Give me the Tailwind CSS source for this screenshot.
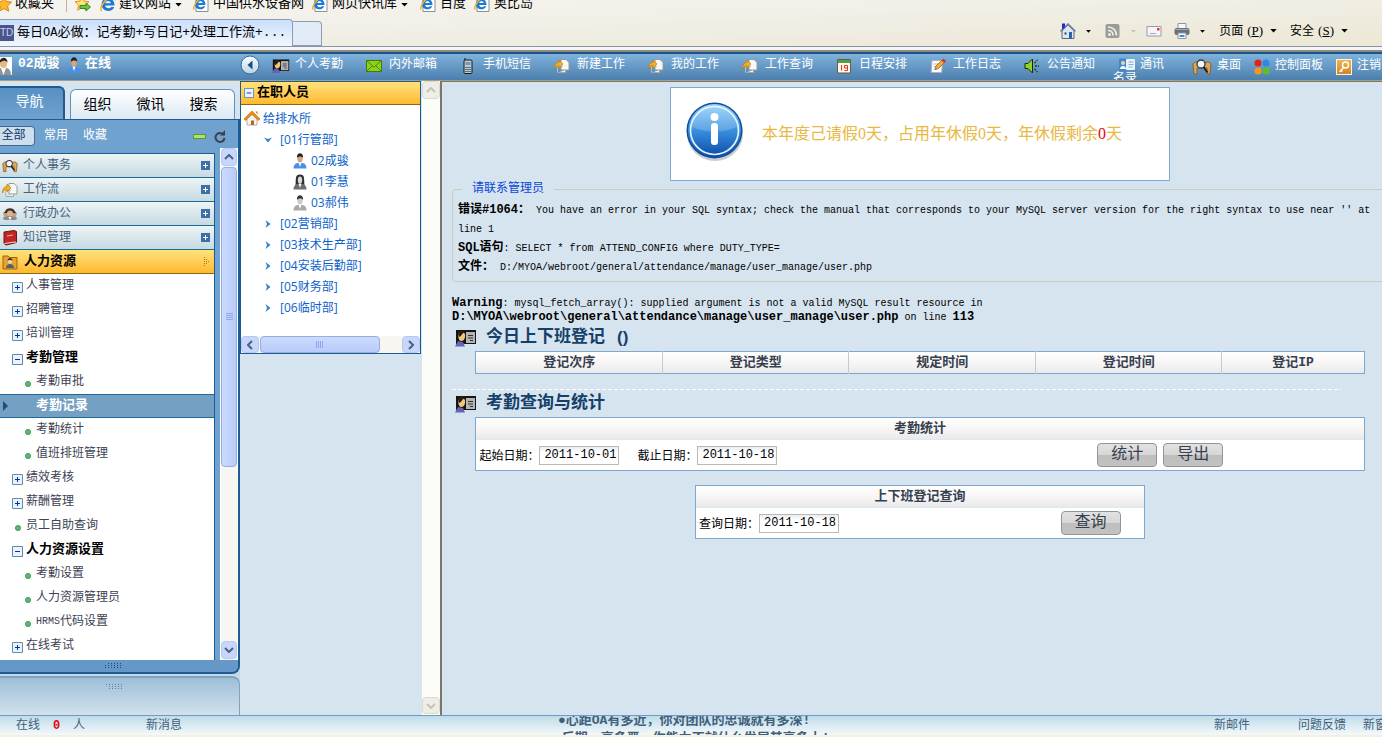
<!DOCTYPE html>
<html lang="zh-CN">
<head>
<meta charset="utf-8">
<title>每日OA必做</title>
<script src="https://cdn.jsdelivr.net/npm/@tailwindcss/browser@4"></script>
</head>
<body class="h-screen overflow-hidden flex flex-col bg-[#d6e4ef] text-black text-[12px] leading-[16px] font-['Liberation_Mono','Noto_Sans_CJK_SC',monospace] whitespace-nowrap">

<svg class="absolute size-0" aria-hidden="true">
  <defs>
    <linearGradient id="gInfo" x1="0" y1="0" x2="0" y2="1"><stop offset="0" stop-color="#8fd0fa"/><stop offset=".5" stop-color="#3a8fdf"/><stop offset="1" stop-color="#0a4aa8"/></linearGradient>
    <linearGradient id="gBack" x1="0" y1="0" x2="0" y2="1"><stop offset="0" stop-color="#ffffff"/><stop offset="1" stop-color="#b9d3e8"/></linearGradient>
    <linearGradient id="gKey" x1="0" y1="0" x2="0" y2="1"><stop offset="0" stop-color="#f0b850"/><stop offset="1" stop-color="#cf8320"/></linearGradient>
  </defs>
  <symbol id="star" viewBox="0 0 16 16"><path d="M8 .5l2.3 5 5.3.6-4 3.7 1.1 5.4L8 12.500l-4.700 2.700 1.100-5.400-4-3.700 5.300-.6z" fill="#ffb62e" stroke="#d9860f"/></symbol>
  <symbol id="staradd" viewBox="0 0 16 16"><path d="M7 .5l2.100 4.600 4.900.6-3.600 3.500 1 5L7 11.700l-4.400 2.500 1-5L0 5.700l4.900-.6z" fill="#ffe07a" stroke="#e0951b"/><path d="M5 9.500h6V7l4.500 4L11 15v-2.500H5z" fill="#6cc24a" stroke="#2f8a1d"/></symbol>
  <symbol id="ie" viewBox="0 0 16 16"><path d="M14.500 9.500H5.200c.2 3 4.600 3.600 6 1.400h3C12.600 17 1.600 16.400 1.600 8.300 1.600 0 14.800-.2 14.500 9.500zM5.300 7.300h5.500c-.3-2.900-5-3-5.500 0z" fill="#1c79d4" fill-rule="evenodd"/><path d="M1.500 15C-1 11 7-.5 14.500 1c1.500.4 1.200 2.300.4 3.400" fill="none" stroke="#f3b32c" stroke-width="1.600"/></symbol>
  <symbol id="iedoc" viewBox="0 0 16 16"><path d="M3 1.500h12v14H3z" fill="#fff" stroke="#8b8f99"/><path d="M12.500 9H5.200c.2 2.400 3.600 3 4.800 1.200h2.300C10.500 15 1.900 14.300 1.900 8 1.900 1 12.800 1 12.500 9zM5.300 7h4.400c-.3-2.300-4-2.300-4.400 0z" fill="#1c79d4" fill-rule="evenodd"/><path d="M.8 13.500C0 9 7 0 12.500 1.500" fill="none" stroke="#f3b32c" stroke-width="1.600"/></symbol>
  <symbol id="home2" viewBox="0 0 16 16"><path d="M2 8v7.500h12V8L8 2z" fill="#dfe6f2" stroke="#5b6788"/><path d="M.5 8.500L8 1l7.500 7.500" fill="none" stroke="#7786ad" stroke-width="1.600"/><path d="M2 .5h3V4L2 6.500z" fill="#1d2fc0"/><path d="M4.500 9.500h2v2h-2z" fill="#33415f"/><path d="M9 9h3v6.500H9z" fill="#2c62ac"/></symbol>
  <symbol id="rss" viewBox="0 0 16 16"><rect x=".5" y="1" width="14" height="14" rx="2" fill="#9c9c96"/><circle cx="4.500" cy="11.500" r="1.500" fill="#eee"/><path d="M3 7.500c3 0 5 2 5 5M3 4c5 0 8.500 3.500 8.500 8.500" fill="none" stroke="#eee" stroke-width="1.600"/></symbol>
  <symbol id="envelope" viewBox="0 0 16 16"><path d="M1 3.500h14v9.500H1z" fill="#f4f4fa" stroke="#9b9aab"/><path d="M11 5h2.500v2.500H11z" fill="#e03a3a"/><path d="M4 10.500h6" stroke="#a8a8b8"/></symbol>
  <symbol id="printer" viewBox="0 0 16 16"><path d="M4 .5h8V6H4z" fill="#f4f7fb" stroke="#8a97a8"/><rect x=".5" y="5" width="15" height="7" rx="2" fill="#6c7078"/><path d="M1.500 6.500h13" stroke="#a9acb4"/><path d="M4 10h8v5.500H4z" fill="#fff" stroke="#8a97a8"/><path d="M5.500 12h5v2h-5z" fill="#3c8ed0"/></symbol>
  <symbol id="caret" viewBox="0 0 8 5"><path d="M0 0h8L4 4.500z" fill="currentColor"/></symbol>
  <symbol id="avatar" viewBox="0 0 12 18"><path d="M0 0h12v18H0z" fill="#fff"/><path d="M-3 18c0-5 2-7 4-7h5c3 0 5 3 5 7z" fill="#8f9499"/><path d="M1 11l2.500 7L6 11z" fill="#fff"/><ellipse cx="3.500" cy="6.500" rx="3.500" ry="4.500" fill="#e6b888"/><path d="M-.5 6c0-7 8.500-7 8 0-.7-3-5-3-8 0z" fill="#2b211c"/></symbol>
  <symbol id="man" viewBox="0 0 14 16"><path d="M.5 15.500c0-3.500 1.500-5 4-5.500h5c2.500.5 4 2 4 5.500z" fill="#4d8fe8"/><path d="M5.500 9.500L7 14l1.500-4.500z" fill="#fff"/><ellipse cx="7" cy="5.500" rx="2.700" ry="4" fill="#d9a679"/><path d="M4 5C3-1.500 11-1.500 10 5 9.500 3 5 3 4 5z" fill="#27211f"/></symbol>
  <symbol id="woman" viewBox="0 0 14 16"><path d="M2.500 13C3 4 2 .5 7 .5S11 4 11.500 13z" fill="#2f2f2f"/><path d="M.5 15.500c0-3.500 1.500-5 4-5.500h5c2.500.5 4 2 4 5.500z" fill="#6e6e6e"/><path d="M5.500 9.500L7 14l1.500-4.500z" fill="#fff"/><ellipse cx="7" cy="6" rx="2.200" ry="3.500" fill="#d8d8d8"/></symbol>
  <symbol id="mangray" viewBox="0 0 14 16"><path d="M.5 15.500c0-3.500 1.500-5 4-5.500h5c2.500.5 4 2 4 5.500z" fill="#a9a9a9"/><path d="M5.500 9.500L7 14l1.500-4.500z" fill="#fff"/><ellipse cx="7" cy="5.500" rx="2.700" ry="4" fill="#cdcdcd"/><path d="M4 5C3-1.500 11-1.500 10 5 9.500 3 5 3 4 5z" fill="#333"/></symbol>
  <symbol id="back" viewBox="0 0 20 20"><circle cx="10" cy="10" r="9" fill="url(#gBack)" stroke="#326ba0"/><path d="M12.500 5.500v9L7.500 10z" fill="#12508a"/></symbol>
  <symbol id="card" viewBox="0 0 22 18"><path d="M1 1h20v14H1z" fill="#151515"/><path d="M11 3h9v11h-9z" fill="#b4b4b4"/><path d="M13 6.500h5M13 9h5M15 11.500h3" stroke="#303030"/><path d="M4 4c4-2 7 0 6 4-.5 3-2 4-4 4S2.500 8 4 4z" fill="#f2c77c"/><path d="M3 3c3-2 6-1 7 0-3 1-3 4-6 5z" fill="#2b1c10"/><path d="M0 17.500L3 12l5 1 2 4.500z" fill="#6560b8"/></symbol>
  <symbol id="mail" viewBox="0 0 16 14"><path d="M.5 1.500h15v11H.5z" fill="#8fd018" stroke="#427b0b"/><path d="M1 2l7 6 7-6M1 12l5-5M15 12l-5-5" fill="none" stroke="#4b840b"/></symbol>
  <symbol id="phone" viewBox="0 0 10 16"><path d="M2 0v3" stroke="#111"/><rect x="1" y="2" width="8" height="13.500" rx="1" fill="#b9cbd8" stroke="#1b1b1b"/><path d="M2.500 4h5v3h-5z" fill="#6f9fb8"/><path d="M2.500 9.500h5M2.500 11.500h5M2.500 13.500h5" stroke="#111" stroke-dasharray="1 1"/></symbol>
  <symbol id="flow" viewBox="0 0 16 16"><path d="M7 1.500h5l3 3V12H7z" fill="#f8f8f6" stroke="#9a9a94"/><path d="M3.500 14.500V8.500H9" fill="none" stroke="#bdbdb6"/><path d="M4 14.500h7.500v-2.500" fill="#efefec" stroke="#a8a8a2"/><path d="M.5 11C.5 6.500 2.500 4.500 5 4.500V2l4 4-4 4V7.500C3 7.500 1.500 8.500.5 11z" fill="#f5b21b" stroke="#c07b0a" stroke-width=".7"/></symbol>
  <symbol id="cal" viewBox="0 0 16 16"><path d="M1.500 1.500h13v13.500h-13z" fill="#fff6e6" stroke="#6d5a44"/><path d="M2 2h12v3H2z" fill="#4da04a"/><path d="M5.500 7v5.500M8.500 7.500h3v2.500h-3zM11.500 10v2.500h-3" fill="none" stroke="#d23a2c"/></symbol>
  <symbol id="note" viewBox="0 0 16 16"><path d="M2 2.500h10.500l-.8 12H1.200z" fill="#fff" stroke="#b3abc8"/><path d="M3.500 6h6M3.500 8.500h5M3.500 11h4" stroke="#a9b8dd"/><path d="M5 11.500L6 8l6-6 2.500 2.500-6 6z" fill="#f2ad2b" stroke="#91540c" stroke-width=".7"/><path d="M11.500 2.500L13.500.5 16 3l-1.800 2z" fill="#da2f3a"/></symbol>
  <symbol id="horn" viewBox="0 0 16 16"><path d="M1 5.500h3L8.500 1v14L4 10.500H1z" fill="#8fd521" stroke="#1b2a08"/><path d="M10.500 5l3-3M11 8h4M10.500 11l3 3" stroke="#1e3a16" stroke-width="1.300" stroke-dasharray="2 1"/></symbol>
  <symbol id="contact" viewBox="0 0 16 14"><rect width="8" height="13" y=".5" rx="1" fill="#3f86d3"/><rect x="7" y="1" width="9" height="11" rx="1" fill="#eaf3fb"/><circle cx="4" cy="5" r="2" fill="#f4d19a"/><path d="M1 11c0-4 6-4 6 0z" fill="#fff"/><path d="M9.500 4h5M9.500 6.500h5M9.500 9h4" stroke="#7fb0df"/></symbol>
  <symbol id="desk" viewBox="0 0 20 16"><path d="M1 5l2-2h5l3 4 3-4h3l2 2-1 10h-3V9H5v6H2z" fill="#d9a75f" stroke="#8e6127"/><circle cx="9" cy="5" r="4" fill="#f3f6f8" stroke="#3c3c3c" stroke-width="1.300"/><path d="M11.500 8l4 5.500" stroke="#222" stroke-width="2"/></symbol>
  <symbol id="dots" viewBox="0 0 16 16"><circle cx="4" cy="4" r="3.500" fill="#e2231a"/><circle cx="12" cy="4" r="3.500" fill="#2a8be2"/><circle cx="4" cy="12" r="3.500" fill="#f39a1c"/><circle cx="12" cy="12" r="3.500" fill="#5fbe2a"/></symbol>
  <symbol id="key" viewBox="0 0 16 16"><rect x=".5" y=".5" width="15" height="15" fill="url(#gKey)" stroke="#fff3d8"/><circle cx="9.500" cy="6" r="3" fill="none" stroke="#fff" stroke-width="1.500"/><path d="M7.500 8.500L3.500 13M4.500 11l2 1.500" stroke="#fff" stroke-width="1.500"/></symbol>
  <symbol id="staff" viewBox="0 0 16 14"><path d="M1 12c0-5 14-5 14 0l-2 1H3z" fill="#8a8d90"/><path d="M3 4.500C4 0 12 0 13 4.500l2 2H1z" fill="#3a312c"/><ellipse cx="8" cy="6.500" rx="3" ry="3" fill="#e0b186"/><circle cx="3.500" cy="8" r="2" fill="#c9a079"/><circle cx="12.500" cy="8" r="2" fill="#c9a079"/><path d="M6.500 10h3L8 13.500z" fill="#fff"/></symbol>
  <symbol id="book" viewBox="0 0 16 16"><path d="M2 2l10-1.500 2.500 1v11L4 15l-2-1.500z" fill="#c12424" stroke="#761212"/><path d="M2.500 13.500L13 12l1.500.8" fill="none" stroke="#f5dcd2"/><path d="M5 6l6-1" stroke="#efb2a8"/></symbol>
  <symbol id="hr" viewBox="0 0 16 16"><path d="M1 2h5l1.500 1.500H15V15H1z" fill="#e9a42c" stroke="#9c6612"/><path d="M4 14c0-3 2-4 4-4s4 1 4 4z" fill="#50626e"/><circle cx="8" cy="7.500" r="2.300" fill="#f3d2a4"/><path d="M5.500 7c0-4 5-4 5 0-1-1.500-4-1.500-5 0z" fill="#333"/></symbol>
  <symbol id="house" viewBox="0 0 16 16"><path d="M3 8v7h10V8L8 3z" fill="#f6f4ee" stroke="#b3b0a8"/><path d="M7 10.500h3V15H7z" fill="#b06a1f"/><path d="M0 9l8-8 8 8-1.500 1.500L8 4.500 1.500 10.500z" fill="#f08c16" stroke="#b7600a" stroke-width=".6"/><path d="M11.500 1.500h2V5z" fill="#d87a12"/></symbol>
  <symbol id="plus" viewBox="0 0 11 11"><path d="M.5 .5h10v10H.5z" fill="#e3f4ff" stroke="#6d8ca5"/><path d="M3 5.500h5M5.500 3v5" stroke="#0b2fa0"/></symbol>
  <symbol id="minus" viewBox="0 0 11 11"><path d="M.5 .5h10v10H.5z" fill="#eaf3ff" stroke="#5f87ac"/><path d="M3 5.500h5" stroke="#0b2fa0"/></symbol>
  <symbol id="plusb" viewBox="0 0 9 9"><path d="M0 0h9v9H0z" fill="#3c70a8"/><path d="M2 4.500h5M4.500 2v5" stroke="#fff"/></symbol>
  <symbol id="leaf" viewBox="0 0 6 6"><circle cx="3" cy="3" r="2.600" fill="#56bd66" stroke="#3c8470" stroke-width=".8"/></symbol>
  <symbol id="down" viewBox="0 0 8 6"><path d="M0 .5l4 1.500 4-1.500L4 5.500z" fill="#2f82cd"/></symbol>
  <symbol id="right" viewBox="0 0 6 8"><path d="M.5 0L2 4 .5 8l5-4z" fill="#2f82cd"/></symbol>
  <symbol id="chev" viewBox="0 0 10 6"><path d="M1 5l4-4 4 4" fill="none" stroke="currentColor" stroke-width="2"/></symbol>
</svg>

<!-- browser chrome -->
<header class="shrink-0 bg-gradient-to-br from-[#f6f4f0] via-[#f0eee4] to-[#ece7d3]">
  <nav class="h-3 flex items-end overflow-hidden text-[13px] leading-4">
    <a href="#" class="flex items-end w-[66px] h-4"><svg class="size-4 -ml-1 shrink-0"><use href="#star"/></svg><span class="ml-[3px]">收藏夹</span></a>
    <span class="w-px h-4 bg-[#b9b5a2] mr-2"></span>
    <a href="#" class="mr-[9px]"><svg class="size-4"><use href="#staradd"/></svg></a>
    <a href="#" class="flex items-end w-[93px] h-4"><svg class="size-4 mr-[3px] shrink-0"><use href="#ie"/></svg>建议网站<svg class="w-[7px] h-[4px] mb-[5px] ml-1 shrink-0"><use href="#caret"/></svg></a>
    <a href="#" class="flex items-end w-[119px] h-4"><svg class="size-4 mr-1 shrink-0"><use href="#iedoc"/></svg>中国供水设备网</a>
    <a href="#" class="flex items-end w-[108px] h-4"><svg class="size-4 mr-1 shrink-0"><use href="#iedoc"/></svg>网页快讯库<svg class="w-[7px] h-[4px] mb-[5px] ml-1 shrink-0"><use href="#caret"/></svg></a>
    <a href="#" class="flex items-end w-[54px] h-4"><svg class="size-4 mr-1 shrink-0"><use href="#iedoc"/></svg>百度</a>
    <a href="#" class="flex items-end h-4"><svg class="size-4 mr-1 shrink-0"><use href="#iedoc"/></svg>奥比岛</a>
  </nav>
  <div class="h-[35px] flex items-end border-b border-[#8b93a5]">
    <div class="w-[293px] h-[27px] border border-l-0 border-b-0 border-[#8f9bb3] rounded-tr bg-gradient-to-b from-[#c9dffb] to-[#f3f7fd] flex items-center text-[13px]">
      <span class="w-[14px] h-4 mr-[3px] bg-[#4a558c] text-[#cfd4ea] text-[10px] font-['Liberation_Sans']">TD</span>每日<span class="text-[12px]">OA</span>必做：记考勤+写日记+处理工作流+...
    </div>
    <div class="w-[29px] h-[25px] border border-l-0 border-[#8f9bb3] rounded-tr bg-[#e2ebf8]"></div>
    <div class="ml-auto flex items-center h-[30px] pr-[34px] font-['Liberation_Serif','Noto_Sans_CJK_SC',serif]">
      <svg class="size-4"><use href="#home2"/></svg>
      <svg class="w-[5px] h-[3px] ml-[10px]"><use href="#caret"/></svg>
      <svg class="size-4 ml-[14px]"><use href="#rss"/></svg>
      <svg class="w-[5px] h-[3px] ml-[10px] text-[#c8c4b4]"><use href="#caret"/></svg>
      <svg class="size-4 ml-[10px]"><use href="#envelope"/></svg>
      <svg class="size-4 ml-3"><use href="#printer"/></svg>
      <svg class="w-[5px] h-[3px] ml-[10px]"><use href="#caret"/></svg>
      <button class="ml-[14px] flex items-center text-[12px]">页面<span class="ml-1 text-[13px]">(<u>P</u>)</span><svg class="w-[7px] h-1 ml-[7px]"><use href="#caret"/></svg></button>
      <button class="ml-[13px] flex items-center text-[12px]">安全<span class="ml-1 text-[13px]">(<u>S</u>)</span><svg class="w-[7px] h-1 ml-[7px]"><use href="#caret"/></svg></button>
    </div>
  </div>
  <div class="h-[5px] bg-[#f3f5f8] border-b-2 border-[#8e8a7c]"></div>
</header>

<!-- application toolbar -->
<nav class="h-[29px] shrink-0 flex overflow-hidden border-t-2 border-t-[#1b5488] border-b border-b-[#a59f86] bg-gradient-to-b from-[#7fb2dc] to-[#4d7fae] text-white leading-[14px]">
  <div class="w-[240px] shrink-0 flex items-start pt-[3px] font-bold text-[13px]">
    <svg class="w-3 h-[18px] shrink-0"><use href="#avatar"/></svg><span class="ml-[6px] w-[49px]">02成骏</span>
    <svg class="w-[14px] h-4 shrink-0"><use href="#man"/></svg><span class="ml-1">在线</span>
  </div>
  <button class="w-5 h-5 mt-px mr-3 shrink-0" aria-label="收起"><svg class="size-5"><use href="#back"/></svg></button>
  <div class="flex shrink-0 pt-1">
    <a href="#" class="w-[94px] flex items-start"><svg class="w-[18px] h-4 mr-[5px]"><use href="#card"/></svg>个人考勤</a>
    <a href="#" class="w-[94px] flex items-start"><svg class="size-4 mr-[7px]"><use href="#mail"/></svg>内外邮箱</a>
    <a href="#" class="w-[94px] flex items-start"><svg class="w-[10px] h-4 mr-[10px] ml-[3px]"><use href="#phone"/></svg>手机短信</a>
    <a href="#" class="w-[94px] flex items-start"><svg class="size-4 mr-[7px]"><use href="#flow"/></svg>新建工作</a>
    <a href="#" class="w-[94px] flex items-start"><svg class="size-4 mr-[7px]"><use href="#flow"/></svg>我的工作</a>
    <a href="#" class="w-[94px] flex items-start"><svg class="size-4 mr-[7px]"><use href="#flow"/></svg>工作查询</a>
    <a href="#" class="w-[94px] flex items-start"><svg class="size-4 mr-[7px]"><use href="#cal"/></svg>日程安排</a>
    <a href="#" class="w-[94px] flex items-start"><svg class="size-4 mr-[7px]"><use href="#note"/></svg>工作日志</a>
    <a href="#" class="w-[94px] flex items-start"><svg class="size-4 mr-[7px]"><use href="#horn"/></svg>公告通知</a>
    <a href="#" class="w-[70px] -ml-[5px] block h-7"><svg class="w-4 h-[14px] ml-[6px] mr-[5px] inline-block align-top"><use href="#contact"/></svg>通讯<br>名录</a>
  </div>
  <div class="flex shrink-0 pt-[5px] ml-[9px]">
    <a href="#" class="w-[62px] flex items-start"><svg class="w-5 h-4 mr-[5px]"><use href="#desk"/></svg>桌面</a>
    <a href="#" class="w-[82px] flex items-start"><svg class="size-4 mr-[5px]"><use href="#dots"/></svg>控制面板</a>
    <a href="#" class="flex items-start"><svg class="size-4 mr-[5px]"><use href="#key"/></svg>注销</a>
  </div>
</nav>

<div class="flex-1 min-h-0 flex">

  <!-- navigation panel -->
  <aside class="w-[240px] shrink-0 flex flex-col bg-gradient-to-b from-[#d6e4ef] to-[#c3d8e8]">
    <div class="h-[38px] shrink-0 flex items-end pt-[5px]">
      <button class="w-[65px] h-[33px] rounded-tr-md border-t-2 border-r-2 border-[#1c5b93] bg-gradient-to-b from-[#5790c3] to-[#70a2cf] text-white text-[14px] pr-1 pb-1">导航</button>
      <div class="ml-[5px] w-[165px] h-[30px] grid grid-cols-3 items-center pr-1 rounded-t-md border border-b-0 border-[#5d93bb] bg-gradient-to-b from-white to-[#dce9f3] text-[14px]">
        <button>组织</button><button>微讯</button><button>搜索</button>
      </div>
    </div>
    <div class="flex-1 min-h-0 flex flex-col border-r-2 border-b-2 border-[#1c5b93] rounded-br-lg bg-[#70a2cf]">
      <div class="h-[29px] shrink-0 flex items-center pt-1 text-white border-t border-[#1c5b93]">
        <button class="w-[35px] h-5 pr-[7px] rounded-r border border-l-0 border-[#44698f] bg-[#cfdeec] text-[#0f3a68]">全部</button>
        <button class="ml-[9px]">常用</button><button class="ml-[15px]">收藏</button>
        <span class="ml-auto w-[13px] h-[5px] border border-[#5a9c28] bg-[#aee06d]"></span>
        <button class="ml-2 mr-3" aria-label="刷新"><svg class="w-3 h-[14px]" viewBox="0 0 12 14" fill="none"><path d="M9.500 5.500A4.500 4.500 0 1 0 10.500 9" stroke="#3c4248" stroke-width="2"/><path d="M11 1v5.500H6z" fill="#3c4248"/></svg></button>
      </div>
      <div class="flex-1 min-h-0 flex">
        <div class="flex-1 min-w-0 mt-[5px] bg-white border-t border-r border-[#1c5b93] overflow-hidden text-[#3c4254]">
          <a href="#" class="h-6 flex items-center pl-[2px] pr-1 border-b border-[#1c6a99] bg-gradient-to-b from-[#eef4f6] to-[#c6dbe2] text-[#47627b]"><svg class="size-4 mr-[5px]"><use href="#desk"/></svg>个人事务<svg class="size-[9px] ml-auto"><use href="#plusb"/></svg></a>
          <a href="#" class="h-6 flex items-center pl-[2px] pr-1 border-b border-[#1c6a99] bg-gradient-to-b from-[#eef4f6] to-[#c6dbe2] text-[#47627b]"><svg class="size-4 mr-[5px]"><use href="#flow"/></svg>工作流<svg class="size-[9px] ml-auto"><use href="#plusb"/></svg></a>
          <a href="#" class="h-6 flex items-center pl-[2px] pr-1 border-b border-[#1c6a99] bg-gradient-to-b from-[#eef4f6] to-[#c6dbe2] text-[#47627b]"><svg class="size-4 mr-[5px]"><use href="#staff"/></svg>行政办公<svg class="size-[9px] ml-auto"><use href="#plusb"/></svg></a>
          <a href="#" class="h-6 flex items-center pl-[2px] pr-1 border-b border-[#1c6a99] bg-gradient-to-b from-[#eef4f6] to-[#c6dbe2] text-[#47627b]"><svg class="size-4 mr-[5px]"><use href="#book"/></svg>知识管理<svg class="size-[9px] ml-auto"><use href="#plusb"/></svg></a>
          <a href="#" class="h-6 flex items-center pl-[2px] pr-1 border-b border-[#8a6a12] bg-gradient-to-b from-[#ffe27a] to-[#ffb929] text-black font-bold text-[13px]"><svg class="size-4 mr-[6px]"><use href="#hr"/></svg>人力资源<svg class="w-[6px] h-[10px] ml-auto" viewBox="0 0 6 10"><path d="M.5 0v10M2.500 2v6M4.500 4v2" stroke="#a8791b" stroke-dasharray="1 1"/></svg></a>
          <a href="#" class="h-6 flex items-center pl-3"><svg class="size-[11px] mr-[3px] mt-[3px]"><use href="#plus"/></svg>人事管理</a>
          <a href="#" class="h-6 flex items-center pl-3"><svg class="size-[11px] mr-[3px] mt-[3px]"><use href="#plus"/></svg>招聘管理</a>
          <a href="#" class="h-6 flex items-center pl-3"><svg class="size-[11px] mr-[3px] mt-[3px]"><use href="#plus"/></svg>培训管理</a>
          <a href="#" class="h-6 flex items-center pl-3 text-black font-bold text-[13px]"><svg class="size-[11px] mr-[3px] mt-[3px]"><use href="#minus"/></svg>考勤管理</a>
          <a href="#" class="h-6 flex items-center pl-[25px]"><svg class="size-[6px] mr-[5px] mt-1"><use href="#leaf"/></svg>考勤审批</a>
          <a href="#" class="h-6 flex items-center pl-[3px] border-y border-[#1c6a99] bg-[#74a0c3] text-white font-bold text-[13px]"><svg class="w-[5px] h-[10px] mr-7" viewBox="0 0 5 10"><path d="M0 0v10l5-5z" fill="#1f4e7c"/></svg>考勤记录</a>
          <a href="#" class="h-6 flex items-center pl-[25px]"><svg class="size-[6px] mr-[5px] mt-1"><use href="#leaf"/></svg>考勤统计</a>
          <a href="#" class="h-6 flex items-center pl-[25px]"><svg class="size-[6px] mr-[5px] mt-1"><use href="#leaf"/></svg>值班排班管理</a>
          <a href="#" class="h-6 flex items-center pl-3"><svg class="size-[11px] mr-[3px] mt-[3px]"><use href="#plus"/></svg>绩效考核</a>
          <a href="#" class="h-6 flex items-center pl-3"><svg class="size-[11px] mr-[3px] mt-[3px]"><use href="#plus"/></svg>薪酬管理</a>
          <a href="#" class="h-6 flex items-center pl-[15px]"><svg class="size-[6px] mr-[5px] mt-1"><use href="#leaf"/></svg>员工自助查询</a>
          <a href="#" class="h-6 flex items-center pl-3 text-black font-bold text-[13px]"><svg class="size-[11px] mr-[3px] mt-[3px]"><use href="#minus"/></svg>人力资源设置</a>
          <a href="#" class="h-6 flex items-center pl-[25px]"><svg class="size-[6px] mr-[5px] mt-1"><use href="#leaf"/></svg>考勤设置</a>
          <a href="#" class="h-6 flex items-center pl-[25px]"><svg class="size-[6px] mr-[5px] mt-1"><use href="#leaf"/></svg>人力资源管理员</a>
          <a href="#" class="h-6 flex items-center pl-[25px]"><svg class="size-[6px] mr-[5px] mt-1"><use href="#leaf"/></svg><span class="text-[10px]">HRMS</span>代码设置</a>
          <a href="#" class="h-6 flex items-center pl-3"><svg class="size-[11px] mr-[3px] mt-[3px]"><use href="#plus"/></svg>在线考试</a>
        </div>
        <div class="w-[18px] ml-[5px] flex flex-col bg-[#f7f6f0] border-x border-white text-[#4d6185]">
          <button class="h-[18px] shrink-0 grid place-items-center rounded-sm border border-[#b7c9ec] bg-[#c6d6fc]" aria-label="上"><svg class="w-[10px] h-[6px]"><use href="#chev"/></svg></button>
          <div class="mt-px h-[300px] shrink-0 rounded-sm border border-[#93aee0] bg-gradient-to-r from-[#cbdafd] to-[#b9cbf8] grid place-items-center"><svg class="w-[7px] h-2" viewBox="0 0 7 8"><path d="M0 .5h7M0 2.500h7M0 4.500h7M0 6.500h7" stroke="#8cabee"/></svg></div>
          <button class="mt-auto mb-px h-[18px] shrink-0 grid place-items-center rounded-sm border border-[#b7c9ec] bg-[#c6d6fc]" aria-label="下"><svg class="w-[10px] h-[6px] rotate-180"><use href="#chev"/></svg></button>
        </div>
      </div>
      <div class="h-[12px] shrink-0 bg-[#6598c8] rounded-br-lg grid place-items-center"><svg class="w-4 h-[6px] -ml-3" viewBox="0 0 16 6"><path d="M3 .5h13M0 2.500h16M0 4.500h16" stroke="#1f4a78" stroke-dasharray="1 2"/></svg></div>
    </div>
    <div class="mt-[2px] h-[39px] shrink-0 border-t-2 border-r border-[#7ea4c0] rounded-tr-lg bg-gradient-to-b from-[#9dbfd9] to-[#d2e1ec] flex justify-center"><svg class="w-4 h-[6px] mt-[6px] -ml-3" viewBox="0 0 16 6"><path d="M0 .5h16M3 2.500h13M3 4.500h13" stroke="#5780a4" stroke-dasharray="1 2"/></svg></div>
  </aside>

  <!-- staff tree -->
  <section class="w-[200px] shrink-0 flex">
    <div class="w-[181px] shrink-0">
      <div class="bg-white border-x border-b border-[#1c5b93]">
        <h2 class="h-6 flex items-center pl-[3px] border-t border-b border-t-[#1c5b93] border-b-[#8a6a12] bg-gradient-to-b from-[#ffe27a] to-[#ffb929] font-bold text-[13px]"><svg class="size-[10px] mr-[3px]"><use href="#minus"/></svg>在职人员</h2>
        <div class="pt-[2px] h-[231px] text-[#0a62c9] leading-[21px] font-['Open_Sans','Noto_Sans_CJK_SC',sans-serif]">
          <a href="#" class="h-[22px] flex items-center pl-[3px]"><svg class="size-4 mr-[3px]"><use href="#house"/></svg>给排水所</a>
          <a href="#" class="h-[21px] flex items-center pl-[23px]"><svg class="w-2 h-[6px] mr-2"><use href="#down"/></svg>[01行管部]</a>
          <a href="#" class="h-[21px] flex items-center pl-[52px]"><svg class="w-[14px] h-4 mr-1"><use href="#man"/></svg>02成骏</a>
          <a href="#" class="h-[21px] flex items-center pl-[52px]"><svg class="w-[14px] h-4 mr-1"><use href="#woman"/></svg>01李慧</a>
          <a href="#" class="h-[21px] flex items-center pl-[52px]"><svg class="w-[14px] h-4 mr-1"><use href="#mangray"/></svg>03郝伟</a>
          <a href="#" class="h-[21px] flex items-center pl-6"><svg class="w-[6px] h-2 mr-[9px]"><use href="#right"/></svg>[02营销部]</a>
          <a href="#" class="h-[21px] flex items-center pl-6"><svg class="w-[6px] h-2 mr-[9px]"><use href="#right"/></svg>[03技术生产部]</a>
          <a href="#" class="h-[21px] flex items-center pl-6"><svg class="w-[6px] h-2 mr-[9px]"><use href="#right"/></svg>[04安装后勤部]</a>
          <a href="#" class="h-[21px] flex items-center pl-6"><svg class="w-[6px] h-2 mr-[9px]"><use href="#right"/></svg>[05财务部]</a>
          <a href="#" class="h-[21px] flex items-center pl-6"><svg class="w-[6px] h-2 mr-[9px]"><use href="#right"/></svg>[06临时部]</a>
        </div>
        <div class="h-[17px] flex bg-[#f7f6f0] text-[#4d6185]">
          <button class="w-[18px] grid place-items-center rounded-sm border border-[#b7c9ec] bg-[#c6d6fc]" aria-label="左"><svg class="w-[10px] h-[6px] -rotate-90"><use href="#chev"/></svg></button>
          <div class="ml-px w-[120px] rounded-sm border border-[#93aee0] bg-gradient-to-b from-[#cbdafd] to-[#b9cbf8] grid place-items-center"><svg class="w-2 h-[7px]" viewBox="0 0 8 7"><path d="M.5 0v7M2.500 0v7M4.500 0v7M6.500 0v7" stroke="#8cabee"/></svg></div>
          <button class="ml-auto w-[18px] grid place-items-center rounded-sm border border-[#b7c9ec] bg-[#c6d6fc]" aria-label="右"><svg class="w-[10px] h-[6px] rotate-90"><use href="#chev"/></svg></button>
        </div>
      </div>
    </div>
    <div class="w-[18px] ml-px flex flex-col bg-[#fcfcf8] text-[#c5c3b8]">
      <button class="h-[18px] grid place-items-center rounded-sm border border-[#dcdacb] bg-[#efeee6]" aria-label="上"><svg class="w-[10px] h-[6px]"><use href="#chev"/></svg></button>
      <button class="mt-auto mb-px h-[17px] grid place-items-center rounded-sm border border-[#dcdacb] bg-[#efeee6]" aria-label="下"><svg class="w-[10px] h-[6px] rotate-180"><use href="#chev"/></svg></button>
    </div>
  </section>

  <!-- attendance page -->
  <main class="flex-1 min-w-0 overflow-hidden border-l-2 border-t border-[#7a776c]">
    <div class="ml-[10px] -mr-[6px]">
      <div class="mx-auto mt-[5px] w-[500px] h-[94px] flex items-center pl-[15px] border border-[#7fa8d0] bg-white text-[16px] text-[#e8b843]">
        <svg class="w-[60px] h-[62px] shrink-0 -mt-1" viewBox="0 0 60 62"><ellipse cx="29" cy="33" rx="28" ry="27" fill="#c9ced3"/><circle cx="28.500" cy="29.500" r="28" fill="#0f4d9c"/><circle cx="28.500" cy="29.500" r="26.500" fill="url(#gInfo)"/><circle cx="28.500" cy="29.500" r="24" fill="none" stroke="#e4f3ff" stroke-width="1.700"/><path d="M6 26a22.500 22.500 0 0 1 45 0c-15 6-30 6-45 0z" fill="#fff" opacity=".18"/><circle cx="28.500" cy="16" r="4" fill="#fff"/><rect x="25" y="22" width="7" height="22" rx="3" fill="#fff"/></svg>
        <p class="ml-4 font-['Liberation_Serif','Noto_Sans_CJK_SC',serif]">本年度己请假0天，占用年休假0天，年休假剩余<span class="text-red-600">0</span>天</p>
      </div>
      <fieldset class="h-[101px] rounded border border-[#cdcdbd] px-[5px] text-[10px] leading-[19px]">
        <legend class="ml-1 px-[10px] text-[12px] leading-4 text-[#0a46d6]">请联系管理员</legend>
        <p class="whitespace-normal h-[38px] mt-1"><b class="text-[12px]">错误#1064：</b> You have an error in your SQL syntax; check the manual that corresponds to your MySQL server version for the right syntax to use near '' at<br>line 1</p>
        <p class="h-[19px]"><b class="text-[12px]">SQL语句</b>: SELECT * from ATTEND_CONFIG where DUTY_TYPE=</p>
        <p class="h-[19px]"><b class="text-[12px]">文件：</b> D:/MYOA/webroot/general/attendance/manage/user_manage/user.php</p>
      </fieldset>
      <div class="mt-[14px] text-[10px] leading-[14px]">
        <p class="h-[14px]"><b class="text-[12px]">Warning</b>: mysql_fetch_array(): supplied argument is not a valid MySQL result resource in</p>
        <p class="h-[14px]"><b class="text-[12px]">D:\MYOA\webroot\general\attendance\manage\user_manage\user.php</b> on line <b class="text-[12px]">113</b></p>
      </div>
      <h2 class="h-[27px] flex items-center pl-[3px] pt-px text-[17px] leading-5 font-bold text-[#15406a]"><svg class="w-[22px] h-[18px] mr-[9px]"><use href="#card"/></svg>今日上下班登记<span class="font-['Liberation_Sans'] ml-3">()</span></h2>
      <table class="w-[95%] mx-auto table-fixed border border-[#7fa8d0] bg-gradient-to-b from-white via-[#f8f6f5] to-[#e9e9ea] text-[#36404f] text-[13px]">
        <thead><tr class="h-[22px]">
          <th class="w-[21%] border-r border-[#c9c9c9]">登记次序</th><th class="w-[21%] border-r border-[#c9c9c9]">登记类型</th><th class="w-[21%] border-r border-[#c9c9c9]">规定时间</th><th class="w-[21%] border-r border-[#c9c9c9]">登记时间</th><th class="w-[16%]">登记IP</th>
        </tr></thead>
      </table>
      <div class="mt-[15px] w-[95%] h-px bg-[repeating-linear-gradient(to_right,#fff_0_4px,transparent_4px_6px)]"></div>
      <h2 class="h-[27px] flex items-center pl-[3px] text-[17px] leading-5 font-bold text-[#15406a]"><svg class="w-[22px] h-[18px] mr-[9px]"><use href="#card"/></svg>考勤查询与统计</h2>
      <form class="w-[95%] mx-auto border border-[#7fa8d0] bg-white">
        <h3 class="h-[22px] border-b border-[#dce8f2] bg-gradient-to-b from-white via-[#f8f6f5] to-[#e9e9ea] text-center leading-[22px] font-bold text-[13px] text-[#36404f]">考勤统计</h3>
        <div class="h-[30px] flex items-center pl-[3px]">
          <div class="w-[54%] flex items-center">
            <label for="d1" class="pt-[3px]">起始日期：</label><input id="d1" value="2011-10-01" class="w-20 h-[19px] pl-1 border border-[#bdb8b3] bg-gradient-to-b from-[#e3eef4] to-white to-30%">
            <label for="d2" class="pt-[3px] ml-[18px]">截止日期：</label><input id="d2" value="2011-10-18" class="w-20 h-[19px] pl-1 border border-[#bdb8b3] bg-gradient-to-b from-[#e3eef4] to-white to-30%">
          </div>
          <div class="flex-1 flex justify-center gap-[6px] text-[16px] leading-5 text-[#36404f]">
            <button type="button" class="w-[60px] h-6 rounded border border-[#949494] bg-linear-[to_bottom,#e2e2e2_0%,#d6d6d6_50%,#bebebe_50%,#c2c2c2_100%]">统计</button>
            <button type="button" class="w-[60px] h-6 rounded border border-[#949494] bg-linear-[to_bottom,#e2e2e2_0%,#d6d6d6_50%,#bebebe_50%,#c2c2c2_100%]">导出</button>
          </div>
        </div>
      </form>
      <form class="mt-[14px] w-[450px] mx-auto border border-[#7fa8d0] bg-white">
        <h3 class="h-[22px] border-b border-[#dce8f2] bg-gradient-to-b from-white via-[#f8f6f5] to-[#e9e9ea] text-center leading-[22px] font-bold text-[13px] text-[#36404f]">上下班登记查询</h3>
        <div class="h-[30px] flex items-center pl-[3px]">
          <div class="w-[76%] flex items-center">
            <label for="d3" class="pt-[3px]">查询日期：</label><input id="d3" value="2011-10-18" class="w-20 h-[19px] pl-1 border border-[#bdb8b3] bg-gradient-to-b from-[#e3eef4] to-white to-30%">
          </div>
          <div class="flex-1 flex justify-center text-[16px] leading-5 text-[#36404f]">
            <button type="button" class="w-[60px] h-6 rounded border border-[#949494] bg-linear-[to_bottom,#e2e2e2_0%,#d6d6d6_50%,#bebebe_50%,#c2c2c2_100%]">查询</button>
          </div>
        </div>
      </form>
    </div>
  </main>
</div>

<!-- status bar -->
<footer class="h-[22px] shrink-0 flex items-start overflow-hidden border-t border-t-[#6b9bc8] border-b-2 border-b-[#f5efdc] bg-gradient-to-b from-[#bfdcea] to-[#f4f9fb] text-[#3f5f7a]">
  <div class="w-[558px] shrink-0 flex pl-4 pt-[2px]">
    <span class="w-[37px]">在线</span><b class="w-5 text-red-600">0</b><span class="w-[73px]">人</span><a href="#">新消息</a>
  </div>
  <div class="w-[560px] shrink-0 h-[19px] overflow-hidden font-bold text-[13px] leading-[18px]">
    <p class="-mt-1">●心距OA有多近，你对团队的忠诚就有多深!</p>
    <p class="-ml-1">●后期，高多严，你能力不就什么发展其高多大!</p>
  </div>
  <div class="ml-auto -mr-[17px] shrink-0 flex pt-[2px]">
    <a href="#" class="w-[84px]">新邮件</a><a href="#" class="w-[65px]">问题反馈</a><a href="#">新窗口</a>
  </div>
</footer>
</body>
</html>
